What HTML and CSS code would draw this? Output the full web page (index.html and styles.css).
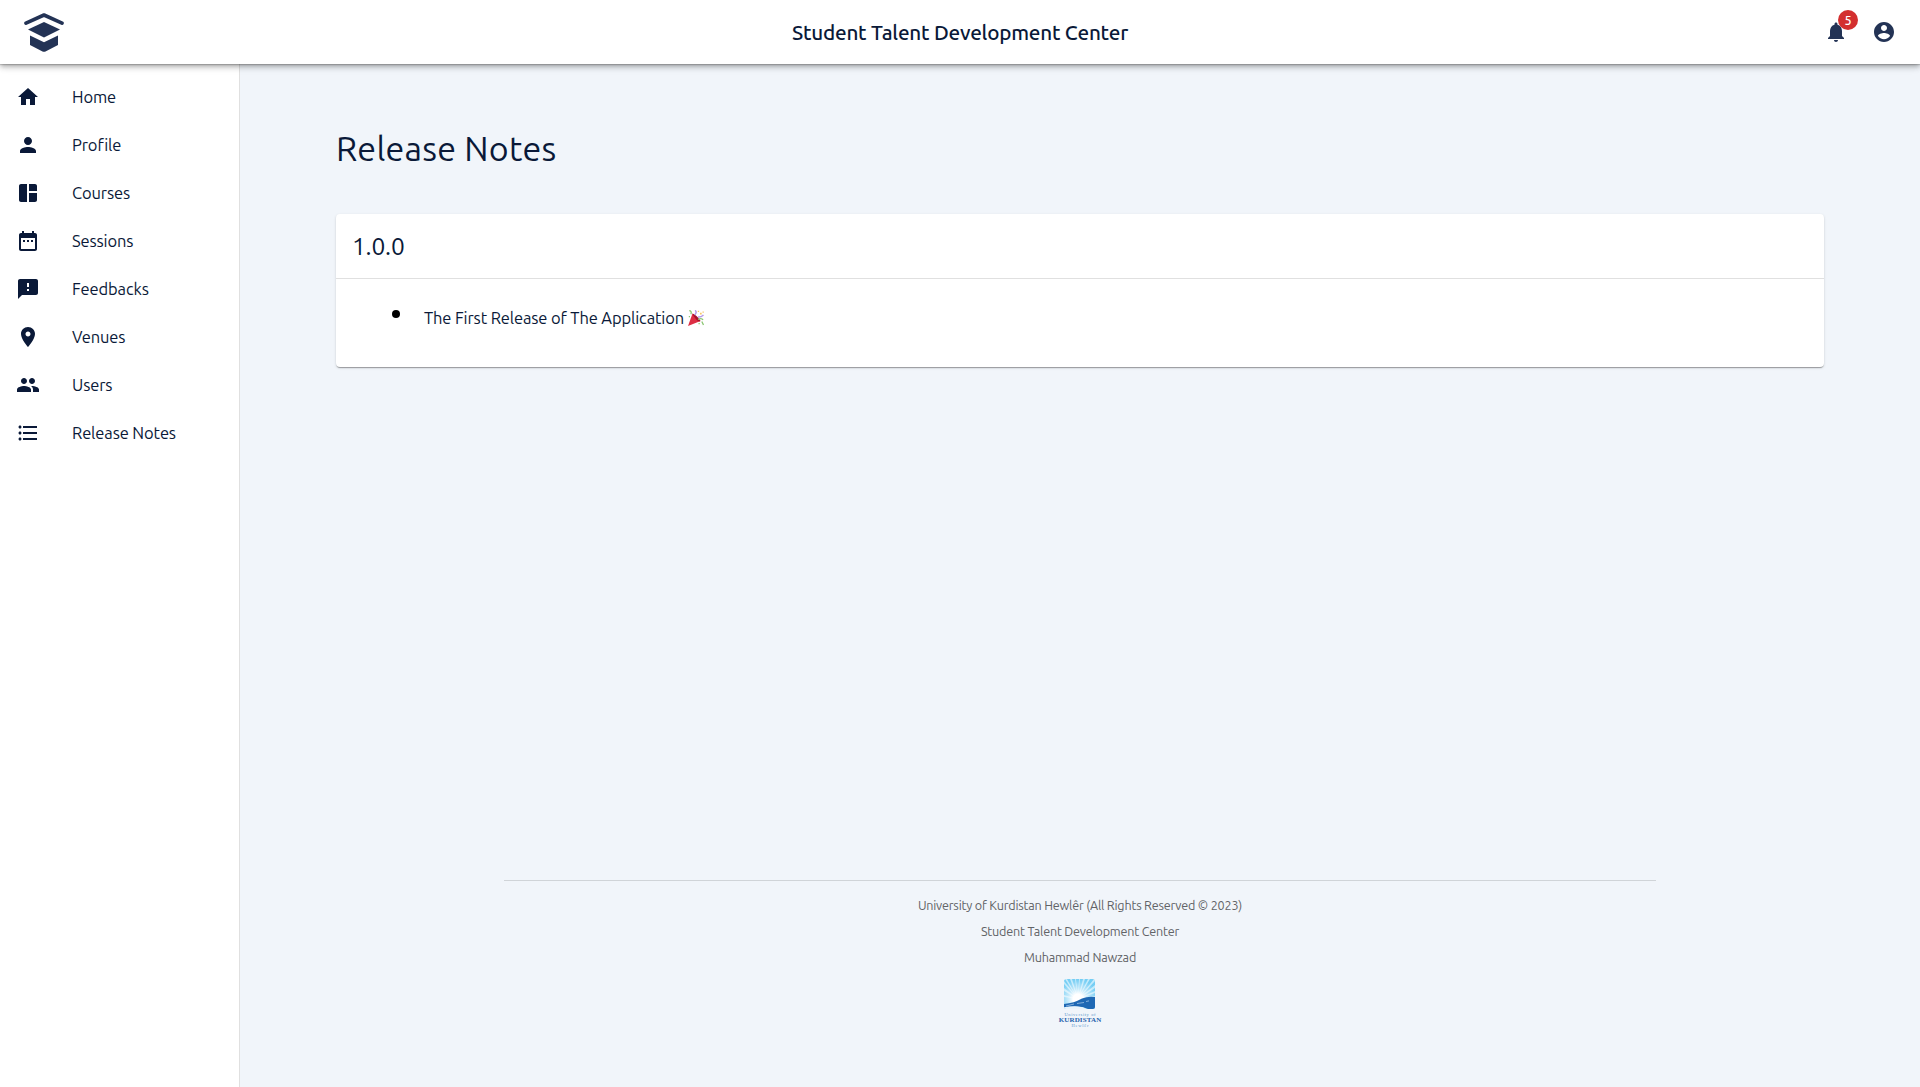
FILE: index.html
```html
<!DOCTYPE html>
<html lang="en">
<head>
<meta charset="utf-8">
<title>Release Notes</title>
<link rel="stylesheet" href="styles.css">
</head>
<body>
<header class="appbar">
  <svg class="brand" viewBox="0 0 40 40" aria-label="Logo">
    <path d="M2 11.2 20 3l18 8.2" fill="none" stroke="currentColor" stroke-width="3.6" stroke-linecap="round" stroke-linejoin="round"/>
    <path d="M20 10 36 17.6 20 25.4 4 17.6Z"/>
    <path d="M6 23.6 20 30.2l14-6.6V33l-12.5 6.4q-1.500 .8-3 0L6 33Z"/>
  </svg>
  <div class="app-title">Student Talent Development Center</div>
  <div class="actions">
    <span class="notify">
      <svg class="icon" viewBox="0 0 24 24"><path d="M12 22c1.100 0 2-.9 2-2h-4c0 1.100.89 2 2 2zm6-6v-5c0-3.070-1.640-5.640-4.500-6.320V4c0-.83-.67-1.500-1.500-1.500s-1.500.67-1.500 1.500v.68C7.630 5.360 6 7.920 6 11v5l-2 2v1h16v-1l-2-2z"/></svg>
      <span class="badge">5</span>
    </span>
    <svg class="icon" viewBox="0 0 24 24"><path d="M12 2C6.480 2 2 6.480 2 12s4.480 10 10 10 10-4.480 10-10S17.520 2 12 2zm0 3c1.660 0 3 1.340 3 3s-1.340 3-3 3-3-1.340-3-3 1.340-3 3-3zm0 14.200c-2.500 0-4.710-1.280-6-3.220.03-1.990 4-3.080 6-3.080 1.990 0 5.970 1.090 6 3.080-1.290 1.940-3.500 3.220-6 3.220z"/></svg>
  </div>
</header>
<div class="layout">
  <nav class="sidebar">
    <a class="nav-item"><svg class="icon" viewBox="0 0 24 24"><path d="M10 20v-6h4v6h5v-8h3L12 3 2 12h3v8z"/></svg><span>Home</span></a>
    <a class="nav-item"><svg class="icon" viewBox="0 0 24 24"><path d="M12 12c2.210 0 4-1.790 4-4s-1.790-4-4-4-4 1.790-4 4 1.790 4 4 4zm0 2c-2.670 0-8 1.340-8 4v2h16v-2c0-2.660-5.330-4-8-4z"/></svg><span>Profile</span></a>
    <a class="nav-item"><svg class="icon" viewBox="0 0 24 24"><path d="M11 21H5c-1.100 0-2-.9-2-2V5c0-1.100.9-2 2-2h6v18zm2 0h6c1.100 0 2-.9 2-2v-7h-8v9zm8-11V5c0-1.100-.9-2-2-2h-6v7h8z"/></svg><span>Courses</span></a>
    <a class="nav-item"><svg class="icon" viewBox="0 0 24 24"><path d="M9 11H7v2h2v-2zm4 0h-2v2h2v-2zm4 0h-2v2h2v-2zm2-7h-1V2h-2v2H8V2H6v2H5c-1.110 0-1.990.9-1.990 2L3 20c0 1.100.89 2 2 2h14c1.100 0 2-.9 2-2V6c0-1.100-.9-2-2-2zm0 16H5V9h14v11z"/></svg><span>Sessions</span></a>
    <a class="nav-item"><svg class="icon" viewBox="0 0 24 24"><path d="M20 2H4c-1.100 0-1.990.9-1.990 2L2 22l4-4h14c1.100 0 2-.9 2-2V4c0-1.100-.9-2-2-2zm-7 12h-2v-2h2v2zm0-4h-2V6h2v4z"/></svg><span>Feedbacks</span></a>
    <a class="nav-item"><svg class="icon" viewBox="0 0 24 24"><path d="M12 2C8.130 2 5 5.130 5 9c0 5.250 7 13 7 13s7-7.750 7-13c0-3.870-3.130-7-7-7zm0 9.500c-1.380 0-2.500-1.120-2.500-2.500s1.120-2.500 2.500-2.500 2.500 1.120 2.500 2.500-1.120 2.500-2.500 2.500z"/></svg><span>Venues</span></a>
    <a class="nav-item"><svg class="icon" viewBox="0 0 24 24"><path d="M16 11c1.660 0 2.990-1.340 2.990-3S17.660 5 16 5c-1.660 0-3 1.340-3 3s1.340 3 3 3zm-8 0c1.660 0 2.990-1.340 2.990-3S9.660 5 8 5C6.340 5 5 6.340 5 8s1.340 3 3 3zm0 2c-2.330 0-7 1.170-7 3.500V19h14v-2.500c0-2.330-4.670-3.500-7-3.500zm8 0c-.29 0-.62.02-.97.05 1.160.84 1.970 1.970 1.970 3.450V19h6v-2.500c0-2.330-4.670-3.500-7-3.500z"/></svg><span>Users</span></a>
    <a class="nav-item"><svg class="icon" viewBox="0 0 24 24"><path d="M4 10.500c-.83 0-1.500.67-1.500 1.500s.67 1.500 1.500 1.500 1.500-.67 1.500-1.500-.67-1.500-1.500-1.500zm0-6c-.83 0-1.500.67-1.500 1.500S3.170 7.500 4 7.500 5.500 6.830 5.500 6 4.830 4.500 4 4.500zm0 12c-.83 0-1.500.68-1.500 1.500s.68 1.500 1.500 1.500 1.500-.68 1.500-1.500-.67-1.500-1.500-1.500zM7 19h14v-2H7v2zm0-6h14v-2H7v2zm0-8v2h14V5H7z"/></svg><span>Release Notes</span></a>
  </nav>
  <main class="content">
    <h1 class="page-title">Release Notes</h1>
    <section class="card">
      <h2 class="version">1.0.0</h2>
      <div class="note">
        <span class="bullet"></span>
        <span class="note-text">The First Release of The Application</span>
        <svg class="party" viewBox="0 0 16 16">
          <path d="M4.500 3.500 12.500 11 0 16Z" fill="#dd2e44"/>
          <path d="M4.500 3.500Q9 5 12.500 11q-1.500 1.300-4.500-1.800T4.500 3.500Z" fill="#a6122c"/>
          <path d="M1.300.5Q4 1.200 2.900 4.200M10 9.300q4-1.600 5 .8M13.800 11.500l1.700 3.500" fill="none" stroke="#8cc774" stroke-width="1.300"/>
          <path d="M6.700 5Q9.300 2.500 7.200.3M10 7q3 .3 5.500-2" fill="none" stroke="#b59be8" stroke-width="1.500"/>
          <path d="M12 2.800h1.700v1.700H12zM9.800.7h1.300V2H9.800zM14.500 1.500h1.300v1.300h-1.300z" fill="#f8c765"/>
          <path d="M10.500 13h1.300v1.300h-1.300zM.8 6h1.200v1.200H.8z" fill="#8cc774"/>
        </svg>
      </div>
    </section>
    <footer class="footer">
      <p>University of Kurdistan Hewlêr (All Rights Reserved © 2023)</p>
      <p>Student Talent Development Center</p>
      <p>Muhammad Nawzad</p>
      <svg class="uni" viewBox="0 0 48 50">
        <defs>
          <radialGradient id="sun" cx="14" cy="20" r="20" gradientUnits="userSpaceOnUse"><stop offset=".25" stop-color="#fff"/><stop offset=".75" stop-color="#c6eafb" stop-opacity=".5"/><stop offset="1" stop-color="#79d0f5" stop-opacity=".3"/></radialGradient>
          <clipPath id="frame"><rect width="31" height="30" rx="2.500"/></clipPath>
        </defs>
        <g transform="translate(8)" clip-path="url(#frame)">
          <rect width="31" height="30" fill="#74cdf4"/>
          <path d="M14 20 0 18v-2zM14 20 0 12V9zM14 20 0 5V2zM14 20 1 0h2zM14 20 6 0h2zM14 20 11 0h1zM14 20 15 0h1zM14 20 19 0h2zM14 20 24 0h2zM14 20 30 0h1v2zM14 20 31 6v3zM14 20 31 12v2zM14 20 31 17v2z" fill="#fff" fill-opacity=".8"/>
          <rect width="31" height="30" fill="url(#sun)"/>
          <path d="M0 25Q10 24 18 19.500q6-2.500 13-1.500V30H24Q16 26 0 28.500Z" fill="#1e68b4"/>
          <path d="M0 28.300Q15 25.500 22 30H0Z" fill="#e9f4fb"/>
          <path d="M2 27 10 25M13 24.500l7-1M22 22.500l3-.6" stroke="#9fc3e5" stroke-width=".8"/>
        </g>
        <text x="24" y="36.500" class="uni-small" textLength="31">University of</text>
        <text x="24" y="43.300" class="uni-name" textLength="42.500">KURDISTAN</text>
        <text x="24" y="48.300" class="uni-small" textLength="17">Hewlêr</text>
      </svg>
    </footer>
  </main>
</div>
</body>
</html>
```
FILE: styles.css
```css
* { box-sizing: border-box; }

body {
  margin: 0;
  height: 1087px;
  display: flex;
  flex-direction: column;
  background: #f1f5fa;
  color: #0a1938;
  font-family: Ubuntu, "Noto Sans", "Open Sans", sans-serif;
}

.icon {
  width: 24px;
  height: 24px;
  fill: currentColor;
  flex: none;
}

.appbar {
  position: relative;
  z-index: 1;
  flex: none;
  height: 64px;
  padding: 0 24px;
  display: grid;
  grid-template-columns: 1fr auto 1fr;
  align-items: center;
  background: #fff;
  box-shadow: 0 2px 4px -1px rgba(0,0,0,.2), 0 4px 5px 0 rgba(0,0,0,.14), 0 1px 10px 0 rgba(0,0,0,.12), 0 1px 1px rgba(0,0,0,.15);
}

.brand {
  width: 40px;
  height: 40px;
  fill: currentColor;
  color: #233355;
}

.app-title {
  padding-top: 1px;
  font-size: 20.7px;
  font-weight: 500;
  line-height: 32px;
  letter-spacing: -.21px;
}

.actions {
  display: flex;
  justify-content: flex-end;
  gap: 24px;
  color: #233355;
}

.notify {
  position: relative;
  display: flex;
}

.badge {
  position: absolute;
  top: -10px;
  right: -10px;
  width: 20px;
  height: 20px;
  border-radius: 50%;
  background: #d32f2f;
  color: #fff;
  font-size: 12.6px;
  font-weight: 500;
  line-height: 21px;
  text-align: center;
}

.layout {
  flex: 1;
  display: flex;
}

.sidebar {
  width: 240px;
  padding-top: 9px;
  background: #fff;
  border-right: 1px solid #e0e0e0;
}

.nav-item {
  height: 48px;
  padding-left: 16px;
  display: flex;
  align-items: center;
  gap: 32px;
  font-size: 16.5px;
  line-height: 24px;
  letter-spacing: -.12px;
}

.content {
  flex: 1;
  padding: 60px 96px 58px;
  display: flex;
  flex-direction: column;
}

.page-title {
  margin: 0 0 41px;
  font-size: 34px;
  font-weight: 400;
  line-height: 49px;
  letter-spacing: .00735em;
}

.card {
  height: 153px;
  background: #fff;
  border-radius: 4px;
  box-shadow: 0 2px 1px -1px rgba(0,0,0,.2), 0 1px 1px 0 rgba(0,0,0,.14), 0 1px 3px 0 rgba(0,0,0,.12);
}

.version {
  margin: 0;
  height: 65px;
  padding-left: 16px;
  border-bottom: 1px solid #e0e0e0;
  font-size: 24.5px;
  font-weight: 400;
  line-height: 65px;
  letter-spacing: -.2px;
}

.note {
  display: flex;
  align-items: center;
  height: 48px;
  margin-top: 15px;
  padding-left: 56px;
  font-size: 16.5px;
  line-height: 24px;
  letter-spacing: -.12px;
}

.bullet {
  width: 8px;
  height: 8px;
  margin: 0 24px 8px 0;
  border-radius: 50%;
  background: #000;
}

.party {
  width: 16px;
  height: 16px;
  margin-left: 4px;
}

.footer {
  width: 1152px;
  margin: auto auto 0;
  padding-top: 11px;
  border-top: 1px solid #d0d4d8;
  display: flex;
  flex-direction: column;
  align-items: center;
  color: #616366;
  font-size: 12.6px;
  letter-spacing: -.2px;
}

.footer p {
  margin: 0;
  line-height: 26px;
}

.uni {
  width: 48px;
  height: 50px;
  margin-top: 9px;
}

.uni-small, .uni-name {
  font-family: "Liberation Serif", serif;
  text-anchor: middle;
  letter-spacing: 0;
}

.uni-small {
  font-size: 4.5px;
  fill: #5a93cb;
}

.uni-name {
  font-size: 7px;
  font-weight: 700;
  fill: #1e62ad;
}
```
